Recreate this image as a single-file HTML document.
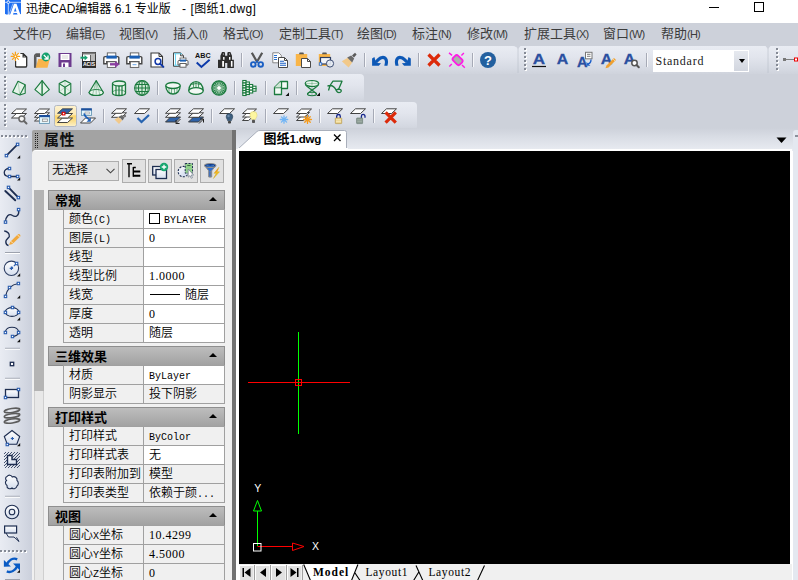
<!DOCTYPE html>
<html>
<head>
<meta charset="utf-8">
<title>迅捷CAD编辑器 6.1 专业版 - [图纸1.dwg]</title>
<style>
*{box-sizing:border-box;margin:0;padding:0}
html,body{width:798px;height:580px;overflow:hidden;background:#cdd1da}
body{position:relative;font-family:"Liberation Sans","Noto Sans CJK SC",sans-serif;font-size:12px;color:#000}
.abs{position:absolute}
#titlebar{left:0;top:0;width:798px;height:23px;background:#fff}
#title{left:26px;top:1px;height:16px;line-height:16px;font-size:12px;color:#000;white-space:pre}
#menubar{left:0;top:23px;width:798px;height:23px;background:#cdd1da}
.mi{position:absolute;top:23px;height:23px;line-height:22px;font-size:13px;color:#3c3c3c;white-space:nowrap}
.mi i{font-style:normal;font-size:11px;letter-spacing:-0.8px}
.tb{position:absolute;height:28px;border-radius:3px;background:linear-gradient(#e9ecf3 0%,#e2e5ed 40%,#d6dae3 80%,#cfd3dc 100%)}
.grip{position:absolute;left:4px;top:4px;width:2px;height:19px;background:repeating-linear-gradient(#8a8f9a 0 1px,#fff 1px 2px,transparent 2px 4px)}
.sep{position:absolute;width:1px;height:14px;background:#a6aab6;box-shadow:1px 0 0 #f6f7fa}
.selbtn{position:absolute;width:22.5px;height:21.5px;border:1px solid #b3b8c2;border-radius:2.5px;background:linear-gradient(#fdf1cd 0%,#fce9b4 42%,#fbd66e 50%,#fbdc84 70%,#fdf0c6 100%)}
svg{position:absolute;overflow:visible}
#ltb{left:0;top:130px;width:32px;height:450px;background:linear-gradient(90deg,#e9ecf3 0%,#dde1ea 45%,#cbd0dc 100%)}
#phead{left:32px;top:130px;width:200px;height:24px;background:#a3a3a3;border-radius:2px 0 0 0}
#ptitle{left:44px;top:129px;font-size:15px;font-weight:bold;line-height:22px;color:#111;letter-spacing:0.5px}
#pbody{left:32px;top:150px;width:200px;height:430px;background:#f0f0f0;border-radius:4px 0 0 0;border-top:1.5px solid #fff}
#psplit{left:232px;top:130px;width:4px;height:450px;background:#727272}
#psplit2{left:236px;top:128px;width:3px;height:452px;background:linear-gradient(#cdd1da 0,#e9ecf2 21px,#fff 21px)}
.simsun{font-family:"Liberation Serif","Noto Sans CJK SC",serif}
#tabbar{left:239px;top:128px;width:559px;height:23px;background:linear-gradient(#cdd1da,#d9dde5 40%,#e9ecf2)}
#canvas{left:239px;top:151px;width:551px;height:413px;background:#000}
#bbar{left:239px;top:564px;width:553px;height:16px;background:#f0f0f0}
.cat{position:absolute;left:48px;width:177px;height:20px;background:linear-gradient(#bdbdbd,#a2a2a2);border:1px solid #8e8e8e;font-weight:bold;font-size:13px;line-height:19px;padding-left:6px;color:#000}
.cat b{position:absolute;right:7px;top:6px;width:0;height:0;border-left:4px solid transparent;border-right:4px solid transparent;border-bottom:4.500px solid #000}
.row{position:absolute;left:63px;width:162px;height:20px;border:1px solid #a0a0a0;background:#f0f0f0;font-size:12px;font-weight:350;line-height:19px;white-space:nowrap;overflow:hidden}
.row .n{position:absolute;left:0;top:0;width:80px;height:18px;padding-left:5px;border-right:1px solid #a0a0a0;overflow:hidden}
.row .v{position:absolute;left:80px;top:0;width:80px;height:18px;padding-left:5px;overflow:hidden}
.row .w{background:#fff}
.lat{font-family:"Liberation Mono",monospace;font-size:10px;letter-spacing:0}
.swatch{position:absolute;left:5px;top:3px;width:11px;height:11px;border:1px solid #000;background:#fff}
.lwline{position:absolute;left:6px;top:8px;width:30px;height:1px;background:#000}
.btab{top:565px;height:15px;line-height:15px;font-family:"Liberation Serif",serif;font-size:11.5px;color:#000;white-space:nowrap}
.num{font-family:"Liberation Serif",serif;font-size:12px;letter-spacing:0.5px}
</style>
</head>
<body>
<div id="titlebar" class="abs"></div>
<svg style="left:5px;top:0" width="16" height="15" viewBox="0 0 16 15"><path d="M0 0H16V13.500L15 14.500H1L0 13.500z" fill="#1f6ff2"/><path d="M0 2.300H16M3.300 0V15" stroke="#fff" stroke-width="0.700"/><circle cx="3.300" cy="2.300" r="1.300" fill="#1f6ff2" stroke="#fff" stroke-width="0.800"/><path d="M5 15L9 3.800H11.500L15.500 15H12.600L10.250 7.500L7.900 15z" fill="#fff"/><path d="M8.200 11.500H12.300V13H8.200z" fill="#fff"/><path d="M3.800 15L8 3.500" stroke="#fff" stroke-width="0.500"/></svg>

<div id="title" class="abs">迅捷CAD编辑器 6.1 专业版<span style="position:absolute;left:156px;top:0">-</span><span style="position:absolute;left:164.500px;top:0;letter-spacing:0.330px">[图纸1.dwg]</span></div>
<div class="abs" style="left:709px;top:7px;width:10px;height:1px;background:#000"></div>
<div class="abs" style="left:754px;top:2px;width:10px;height:10px;border:1px solid #000"></div>
<div id="menubar" class="abs"></div>
<div class="mi" style="left:13px">文件<i>(F)</i></div>
<div class="mi" style="left:66px">编辑<i>(E)</i></div>
<div class="mi" style="left:119px">视图<i>(V)</i></div>
<div class="mi" style="left:173px">插入<i>(I)</i></div>
<div class="mi" style="left:223px">格式<i>(O)</i></div>
<div class="mi" style="left:279px">定制工具<i>(T)</i></div>
<div class="mi" style="left:357px">绘图<i>(D)</i></div>
<div class="mi" style="left:412px">标注<i>(N)</i></div>
<div class="mi" style="left:467px">修改<i>(M)</i></div>
<div class="mi" style="left:524px">扩展工具<i>(X)</i></div>
<div class="mi" style="left:603px">窗口<i>(W)</i></div>
<div class="mi" style="left:661px">帮助<i>(H)</i></div>
<div class="tb" style="left:0px;top:46px;width:517px;border-radius:0 4px 4px 0"></div><svg style="left:4px;top:47.8px" width="3" height="24" viewBox="0 0 3 24"><rect x="1" y="1" width="2" height="2" fill="#fff"/><rect x="0" y="0" width="2" height="2" fill="#858a95"/><rect x="1" y="5" width="2" height="2" fill="#fff"/><rect x="0" y="4" width="2" height="2" fill="#858a95"/><rect x="1" y="9" width="2" height="2" fill="#fff"/><rect x="0" y="8" width="2" height="2" fill="#858a95"/><rect x="1" y="13" width="2" height="2" fill="#fff"/><rect x="0" y="12" width="2" height="2" fill="#858a95"/><rect x="1" y="17" width="2" height="2" fill="#fff"/><rect x="0" y="16" width="2" height="2" fill="#858a95"/><rect x="1" y="21" width="2" height="2" fill="#fff"/><rect x="0" y="20" width="2" height="2" fill="#858a95"/></svg>
<svg style="left:11px;top:52px" width="16" height="16" viewBox="0 0 16 16"><path d="M4.600 9.500V14a1 1 0 0 0 1 1h9a1 1 0 0 0 1-1V5l-3.500-3.500H9.500" fill="#fff" stroke="#333" stroke-width="1.200"/><path d="M4.600 9.500V3l4-1.500h3.500V5H15.600V14H4.600z" fill="#fff" stroke="none"/><path d="M4.600 9V14a1 1 0 0 0 1 1h9a1 1 0 0 0 1-1V5l-3.500-3.500H9.500M12.100 1.500V5h3.500" fill="none" stroke="#333" stroke-width="1.200"/>
<g stroke="#f7a21b" stroke-width="1.200" stroke-linecap="round"><path d="M4.400 0.200v8.400M0.200 4.400h8.400M1.400 1.400l6 6M7.400 1.400l-6 6"/></g><circle cx="4.400" cy="4.400" r="0.800" fill="#fff"/></svg>
<svg style="left:34px;top:52px" width="16" height="16" viewBox="0 0 16 16"><path d="M0.800 15.500V4a1.800 1.800 0 0 1 1.800-1.800h3.400" fill="none" stroke="#5a5a5a" stroke-width="1.700"/><path d="M0 15.700V4.500h2.500v11.200z" fill="#5a5a5a"/><path d="M1.500 5V2.200H6V5z" fill="#5a5a5a"/>
<path d="M1.800 15.700l2.400-8.700h11.600l-2.300 8.700z" fill="#f9b44a"/>
<circle cx="11.900" cy="5" r="4.400" fill="#12a06e"/><path d="M9.800 3l3.600 3.600M14 3.400v3.600h-3.600" fill="none" stroke="#fff" stroke-width="1.300"/></svg>
<svg style="left:57px;top:52px" width="16" height="16" viewBox="0 0 16 16"><path d="M1.5 1h13v14h-13z" fill="#6c3a8e"/><rect x="3.5" y="2" width="9" height="6" fill="#fff"/><path d="M5 4h6M5 6h6" stroke="#c9c9c9" stroke-width="0.8"/><rect x="4.5" y="10.5" width="7" height="4.5" fill="#fff"/><rect x="6" y="11.5" width="2" height="3.5" fill="#6c3a8e"/></svg>
<svg style="left:80px;top:52px" width="16" height="16" viewBox="0 0 16 16"><rect x="2.5" y="0.5" width="13" height="15" fill="#fff" stroke="#3a3a3a"/><rect x="2.5" y="0.5" width="13" height="2" fill="#7a7a7a"/><rect x="11" y="3" width="4" height="6" fill="#b9b9b9"/><path d="M10.5 3v6" stroke="#3a3a3a" stroke-width="0.8"/>
<path d="M0.5 5.7h4.8" stroke="#17a06f" stroke-width="2"/><path d="M4.6 3l3.2 2.7-3.2 2.7z" fill="#17a06f"/>
<rect x="2" y="9" width="14" height="6.5" fill="#2b2b2b"/><text x="9" y="14.4" font-family="Liberation Sans,sans-serif" font-size="5.6" font-weight="bold" fill="#fff" text-anchor="middle" textLength="12" lengthAdjust="spacingAndGlyphs">ACIS</text></svg>
<svg style="left:103px;top:52px" width="16" height="16" viewBox="0 0 16 16"><rect x="4.300" y="0.900" width="8.500" height="4" fill="#fff" stroke="#5a5a5a" stroke-width="0.900"/><path d="M0.800 11.800V5.800a1.200 1.200 0 0 1 1.200-1.200h12.600a1.200 1.200 0 0 1 1.200 1.200V11.800h-3v-2h-9v2z" fill="#fff" stroke="#454545" stroke-width="1.400"/><rect x="3.400" y="3.600" width="10.400" height="3" fill="#1a5fb4"/><rect x="4.300" y="9.800" width="8.500" height="5.600" fill="#fff" stroke="#5a5a5a" stroke-width="0.900"/><path d="M7 12.300h6" stroke="#8a3fa0" stroke-width="2.400"/><path d="M12 8.900l4.600 3.400-4.600 3.400z" fill="#8a3fa0"/></svg>
<svg style="left:126px;top:52px" width="16" height="16" viewBox="0 0 16 16"><rect x="4.300" y="0.900" width="8.500" height="4" fill="#fff" stroke="#5a5a5a" stroke-width="0.900"/><path d="M0.800 11.800V5.800a1.200 1.200 0 0 1 1.200-1.200h12.600a1.200 1.200 0 0 1 1.200 1.200V11.800h-3v-2h-9v2z" fill="#fff" stroke="#454545" stroke-width="1.400"/><rect x="3.400" y="3.600" width="10.400" height="3" fill="#1a5fb4"/><rect x="4.300" y="9.800" width="8.500" height="5.600" fill="#fff" stroke="#5a5a5a" stroke-width="0.900"/><path d="M6.500 12.700h4" stroke="#6aa5e8" stroke-width="1"/></svg>
<svg style="left:149px;top:52px" width="16" height="16" viewBox="0 0 16 16"><path d="M2 1h8l3.5 3.5V15H2z" fill="#fff" stroke="#3a3a3a" stroke-width="1.1"/><path d="M10 1v3.5h3.5" fill="none" stroke="#3a3a3a"/><circle cx="9" cy="9.5" r="2.9" fill="#fff" stroke="#1238a8" stroke-width="1.5"/><path d="M11.2 11.7l3.2 3.2" stroke="#1238a8" stroke-width="2" stroke-linecap="round"/></svg>
<svg style="left:172px;top:52px" width="16" height="16" viewBox="0 0 16 16"><path d="M1.5 0.8h7l3 3v10.5h-10z" fill="#fff" stroke="#4a4a4a"/><path d="M8.5 0.8v3h3" fill="none" stroke="#4a4a4a"/><path d="M3.5 1.5v12M2 1.8h8M2 13.2h6" stroke="#5fd0f0" stroke-width="0.9" fill="none"/>
<rect x="8" y="6" width="6" height="3" fill="#fff" stroke="#5a5a5a" stroke-width="0.8"/><path d="M6 13V9.5a1 1 0 0 1 1-1h8a1 1 0 0 1 1 1V13h-2v-1.5h-6V13z" fill="#fff" stroke="#4a4a4a" stroke-width="0.9"/><rect x="8" y="7.6" width="6" height="2" fill="#1a5fb4"/><rect x="8" y="11.5" width="6" height="3.7" fill="#fff" stroke="#5a5a5a" stroke-width="0.9"/></svg>
<svg style="left:195px;top:52px" width="16" height="16" viewBox="0 0 16 16"><text x="7.900" y="6" font-family="Liberation Sans,sans-serif" font-size="7.800" font-weight="bold" fill="#111" text-anchor="middle" textLength="15.600" lengthAdjust="spacingAndGlyphs">ABC</text><path d="M1.700 10.600l4.700 4.400 8.200-7.150" fill="none" stroke="#0c3aaa" stroke-width="2"/></svg>
<svg style="left:218px;top:52px" width="16" height="16" viewBox="0 0 16 16"><path d="M4 0H6.600L7.100 1.500V3.700H9.300V1.500L9.800 0H12.400L14 3.700V7.850H15.900V15.900H9.300V10.900H7.100V15.900H0V7.850H2.400V3.700z" fill="#2e2e2e"/><path d="M5.100 5.100H6.500V7.850H5.100zM11 5.100H12.400V7.850H11z" fill="#fff"/><path d="M4.200 9H6V14.700H4.200zM12.900 9H14.500V14.700H12.900z" fill="#fff"/><circle cx="5.400" cy="2.100" r="0.500" fill="#fff"/><circle cx="11.500" cy="2.100" r="0.500" fill="#fff"/></svg>
<div class="sep" style="left:241px;top:53px"></div>
<svg style="left:249px;top:52px" width="16" height="16" viewBox="0 0 16 16"><path d="M2.8 0.8l5.2 9 5.2-9" fill="none" stroke="#555" stroke-width="2.2" stroke-linejoin="round"/><path d="M8 8.5v2" stroke="#1a5fc4" stroke-width="2"/><circle cx="4.3" cy="12.4" r="2.3" fill="none" stroke="#1a5fc4" stroke-width="1.9"/><circle cx="11.7" cy="12.4" r="2.3" fill="none" stroke="#1a5fc4" stroke-width="1.9"/></svg>
<svg style="left:272px;top:52px" width="16" height="16" viewBox="0 0 16 16"><path d="M0.8 0.8h6l2.5 2.5v7.5h-8.5z" fill="#fff" stroke="#7a7a7a" stroke-width="0.9"/><path d="M2 3.5h3M2 5.5h3M2 7.5h3" stroke="#2a6fd0" stroke-width="1"/>
<path d="M6.5 5.5h6l3 3v7h-9z" fill="#fff" stroke="#4a4a4a"/><path d="M12.5 5.5v3h3" fill="none" stroke="#4a4a4a"/><path d="M8 9.2h4M8 11.2h6M8 13.2h6" stroke="#1a5fc4" stroke-width="1.1"/></svg>
<svg style="left:295px;top:52px" width="16" height="16" viewBox="0 0 16 16"><path d="M0.8 2h11.4v12h-11.4z" fill="#f9b548"/><path d="M4 2.2h5l-0.6-1.6h-3.8z" fill="#555"/><path d="M6.5 6.5h6l3 3v6h-9z" fill="#fff" stroke="#4a4a4a"/><path d="M12.5 6.5v3h3" fill="none" stroke="#4a4a4a"/></svg>
<svg style="left:318px;top:52px" width="16" height="16" viewBox="0 0 16 16"><path d="M0.8 2h11.4v12h-11.4z" fill="#f9b548"/><path d="M4 2.2h5l-0.6-1.6h-3.8z" fill="#555"/><rect x="2.5" y="5.5" width="10" height="6.5" fill="#f2f4f8" stroke="#2d3e63" stroke-width="1.2"/><circle cx="12" cy="11.5" r="3.6" fill="#e8edf5" fill-opacity="0.9" stroke="#3d4e73" stroke-width="1"/><rect x="1.3" y="10.8" width="2.4" height="2.4" fill="#fff" stroke="#2a6fd0" stroke-width="0.9"/></svg>
<svg style="left:341px;top:52px" width="16" height="16" viewBox="0 0 16 16"><path d="M0.8 9.2l6-3.4 4.4 4.6-3.6 5z" fill="#f2c98a"/><path d="M6.2 5.4l4-2 3 3.2-2 3.8z" fill="#6a6a6a"/><path d="M11 3.4l3-2.6 1.6 1.6-2.6 3z" fill="#5a5a5a"/></svg>
<div class="sep" style="left:364px;top:53px"></div>
<svg style="left:372px;top:52px" width="16" height="16" viewBox="0 0 16 16"><path d="M4 10L6.300 7.600C8 5.700 9.500 5.400 11 5.400C13.300 5.400 14.500 7.500 14.500 9.700C14.500 12 13.900 12.800 13.900 13.800" fill="none" stroke="#0d58b6" stroke-width="3.100"/><path d="M0.100 6.400L2.400 4.900L3.400 8.600L5.200 11L9 11.300L6.800 13.800H0.100z" fill="#0d58b6"/></svg>
<svg style="left:395px;top:52px" width="16" height="16" viewBox="0 0 16 16"><g transform="translate(15.900 0) scale(-1 1)"><path d="M4 10L6.300 7.600C8 5.700 9.500 5.400 11 5.400C13.300 5.400 14.500 7.500 14.500 9.700C14.500 12 13.900 12.800 13.900 13.800" fill="none" stroke="#0d58b6" stroke-width="3.100"/><path d="M0.100 6.400L2.400 4.900L3.400 8.600L5.200 11L9 11.300L6.800 13.800H0.100z" fill="#0d58b6"/></g></svg>
<div class="sep" style="left:418px;top:53px"></div>
<svg style="left:426px;top:52px" width="16" height="16" viewBox="0 0 16 16"><path d="M2.5 2.5l11 11M13.500 2.5l-11 11" stroke="#dc2a0a" stroke-width="3.2"/></svg>
<svg style="left:449px;top:52px" width="16" height="16" viewBox="0 0 16 16"><rect x="-4.800" y="-3.500" width="9.600" height="7" rx="2.200" transform="translate(8.600 8.100) rotate(45)" fill="#a9b3ab" stroke="#ff1ae6" stroke-width="1.800"/><path d="M0 0.900L3.100 3.400M14.900 0.900L12.400 3.400M0.300 14.400L2.800 12M13 13L15.800 15.700" stroke="#ff1ae6" stroke-width="1.400"/></svg>
<div class="sep" style="left:472px;top:53px"></div>
<svg style="left:480px;top:52px" width="16" height="16" viewBox="0 0 16 16"><circle cx="8" cy="8" r="8" fill="#23609f"/><text x="8" y="12.600" font-family="Liberation Sans,sans-serif" font-size="13" font-weight="bold" fill="#fff" text-anchor="middle">?</text></svg>
<div class="tb" style="left:516px;top:46px;width:252px;border-radius:0"></div><svg style="left:524px;top:47.8px" width="3" height="24" viewBox="0 0 3 24"><rect x="1" y="1" width="2" height="2" fill="#fff"/><rect x="0" y="0" width="2" height="2" fill="#858a95"/><rect x="1" y="5" width="2" height="2" fill="#fff"/><rect x="0" y="4" width="2" height="2" fill="#858a95"/><rect x="1" y="9" width="2" height="2" fill="#fff"/><rect x="0" y="8" width="2" height="2" fill="#858a95"/><rect x="1" y="13" width="2" height="2" fill="#fff"/><rect x="0" y="12" width="2" height="2" fill="#858a95"/><rect x="1" y="17" width="2" height="2" fill="#fff"/><rect x="0" y="16" width="2" height="2" fill="#858a95"/><rect x="1" y="21" width="2" height="2" fill="#fff"/><rect x="0" y="20" width="2" height="2" fill="#858a95"/></svg>
<svg style="left:531px;top:52px" width="16" height="16" viewBox="0 0 16 16"><text x="8" y="12.2" font-family="Liberation Sans,sans-serif" font-size="14.7" font-weight="bold" fill="#2a4fa0" stroke="#2a4fa0" stroke-width="0.300" text-anchor="middle" textLength="12.3" lengthAdjust="spacingAndGlyphs">A</text><path d="M1 14.500H15" stroke="#111" stroke-width="1.200"/></svg>
<svg style="left:554px;top:52px" width="16" height="16" viewBox="0 0 16 16"><text x="8.5" y="12.2" font-family="Liberation Sans,sans-serif" font-size="14.7" font-weight="bold" fill="#2a4fa0" stroke="#2a4fa0" stroke-width="0.300" text-anchor="middle" textLength="11.5" lengthAdjust="spacingAndGlyphs">A</text></svg>
<svg style="left:577px;top:52px" width="16" height="16" viewBox="0 0 16 16"><text x="5.3" y="15.2" font-family="Liberation Sans,sans-serif" font-size="14.7" font-weight="bold" fill="#2a4fa0" stroke="#2a4fa0" stroke-width="0.300" text-anchor="middle" textLength="10.5" lengthAdjust="spacingAndGlyphs">A</text><rect x="8.500" y="0.300" width="6.500" height="6.500" fill="#fff" stroke="#777" stroke-width="1"/><path d="M10 2.300h3.500M10 4.300h3.500" stroke="#555" stroke-width="0.800"/><path d="M14 7.500C14 10 13 11.500 11 12" fill="none" stroke="#1c5fc8" stroke-width="1.400"/><path d="M9.500 10V13.800H13.300z" fill="#1c5fc8"/></svg>
<svg style="left:600px;top:52px" width="16" height="16" viewBox="0 0 16 16"><text x="6.5" y="12.2" font-family="Liberation Sans,sans-serif" font-size="14.7" font-weight="bold" fill="#2a4fa0" stroke="#2a4fa0" stroke-width="0.300" text-anchor="middle" textLength="11.5" lengthAdjust="spacingAndGlyphs">A</text><path d="M6.500 13.500L14 6L16 8L8.500 15.500L5.500 16.300z" fill="#f0a030"/><path d="M13 7L15 9" stroke="#f9e0b0" stroke-width="0.800"/></svg>
<svg style="left:623px;top:52px" width="16" height="16" viewBox="0 0 16 16"><text x="6.5" y="12.2" font-family="Liberation Sans,sans-serif" font-size="14.7" font-weight="bold" fill="#2a4fa0" stroke="#2a4fa0" stroke-width="0.300" text-anchor="middle" textLength="11.5" lengthAdjust="spacingAndGlyphs">A</text><circle cx="11.500" cy="11" r="2.700" fill="#fff" stroke="#555" stroke-width="1.500"/><path d="M13.500 13L15.800 15.300" stroke="#555" stroke-width="2" stroke-linecap="round"/></svg>
<div class="sep" style="left:646px;top:53px"></div>
<div class="abs" style="left:653px;top:50px;width:96px;height:22px;background:#fff"></div>
<div class="abs simsun" style="left:655.500px;top:51px;height:21px;line-height:21px;font-size:12px;letter-spacing:0.750px;color:#1a1a1a">Standard</div>
<div class="abs" style="left:734px;top:51px;width:14px;height:20px;background:linear-gradient(#e6e9ef,#d2d6df)"></div>
<div class="abs" style="left:738.500px;top:59px;width:0;height:0;border-left:3.500px solid transparent;border-right:3.500px solid transparent;border-top:4px solid #000"></div>
<div class="tb" style="left:768px;top:46px;width:30px;border-radius:0"></div><svg style="left:776px;top:47.8px" width="3" height="24" viewBox="0 0 3 24"><rect x="1" y="1" width="2" height="2" fill="#fff"/><rect x="0" y="0" width="2" height="2" fill="#858a95"/><rect x="1" y="5" width="2" height="2" fill="#fff"/><rect x="0" y="4" width="2" height="2" fill="#858a95"/><rect x="1" y="9" width="2" height="2" fill="#fff"/><rect x="0" y="8" width="2" height="2" fill="#858a95"/><rect x="1" y="13" width="2" height="2" fill="#fff"/><rect x="0" y="12" width="2" height="2" fill="#858a95"/><rect x="1" y="17" width="2" height="2" fill="#fff"/><rect x="0" y="16" width="2" height="2" fill="#858a95"/><rect x="1" y="21" width="2" height="2" fill="#fff"/><rect x="0" y="20" width="2" height="2" fill="#858a95"/></svg>
<svg style="left:514.5px;top:46px" width="6" height="28" viewBox="0 0 6 28"><path d="M3 2V27" stroke="#b9bec9" stroke-opacity="0.600" stroke-width="1"/><path d="M0.500 0H5.500L3 3z" fill="#cdd1da"/></svg>
<svg style="left:765px;top:46px" width="6" height="28" viewBox="0 0 6 28"><path d="M3 2V27" stroke="#b9bec9" stroke-opacity="0.600" stroke-width="1"/><path d="M0.500 0H5.500L3 3z" fill="#cdd1da"/></svg>
<svg style="left:783px;top:52px" width="16" height="16" viewBox="0 0 16 16"><path d="M1 7.500h11" stroke="#808080" stroke-width="1"/><rect x="0" y="6" width="3" height="3" fill="#777"/><rect x="11.500" y="6" width="3" height="3" fill="#fff" stroke="#e00" stroke-width="1"/></svg>
<div class="tb" style="left:0px;top:74px;width:364px;border-radius:0 4px 4px 0"></div><svg style="left:4px;top:75.8px" width="3" height="24" viewBox="0 0 3 24"><rect x="1" y="1" width="2" height="2" fill="#fff"/><rect x="0" y="0" width="2" height="2" fill="#858a95"/><rect x="1" y="5" width="2" height="2" fill="#fff"/><rect x="0" y="4" width="2" height="2" fill="#858a95"/><rect x="1" y="9" width="2" height="2" fill="#fff"/><rect x="0" y="8" width="2" height="2" fill="#858a95"/><rect x="1" y="13" width="2" height="2" fill="#fff"/><rect x="0" y="12" width="2" height="2" fill="#858a95"/><rect x="1" y="17" width="2" height="2" fill="#fff"/><rect x="0" y="16" width="2" height="2" fill="#858a95"/><rect x="1" y="21" width="2" height="2" fill="#fff"/><rect x="0" y="20" width="2" height="2" fill="#858a95"/></svg>
<svg style="left:11px;top:80px" width="16" height="16" viewBox="0 0 16 16"><g fill="none" stroke="#1b7a3e" stroke-width="1.1" stroke-linejoin="round"><path d="M7 1.200L14.200 4.800V13.200L8.800 15L1.600 12z" fill="#e6f3ea"/><path d="M14.200 4.800L8.800 15" /><path d="M7 1.200L8.800 15" stroke-width="0.5" stroke-opacity="0.5"/></g></svg>
<svg style="left:34px;top:80px" width="16" height="16" viewBox="0 0 16 16"><g fill="none" stroke="#1b7a3e" stroke-width="1.1" stroke-linejoin="round"><path d="M8.100 0.600L0.900 9.600L8.100 15.600L15.300 9.600z" fill="#e6f3ea"/><path d="M8.100 0.600V15.600" stroke-width="1.400"/></g></svg>
<svg style="left:57px;top:80px" width="16" height="16" viewBox="0 0 16 16"><g fill="none" stroke="#1b7a3e" stroke-width="1.1" stroke-linejoin="round"><path d="M8 0.400L2.200 3.600V12L8 15.600L13.800 12V3.600z" fill="#e6f3ea"/><path d="M8 7.200V15.600" stroke-width="1.400"/><path d="M2.200 3.600L8 7.200L13.800 3.600" stroke-width="1.100"/><path d="M8 0.400V7.200M2.200 12L8 7.200L13.800 12" stroke-width="0.400" stroke-opacity="0.500"/></g></svg>
<div class="sep" style="left:80px;top:81px"></div>
<svg style="left:88px;top:80px" width="16" height="16" viewBox="0 0 16 16"><g fill="none" stroke="#1b7a3e" stroke-width="1.1" stroke-linejoin="round"><path d="M8.200 0.600L1 12.500A7.200 3 0 0 0 15.400 12.500z" fill="#e6f3ea"/><ellipse cx="8.200" cy="12.500" rx="7.200" ry="3" stroke-width="0.900"/><path d="M8.200 0.600L4.500 15M8.200 0.600L11.900 15M8.200 0.600V15.400" stroke-width="0.500" stroke-opacity="0.700"/></g></svg>
<svg style="left:111px;top:80px" width="16" height="16" viewBox="0 0 16 16"><g fill="none" stroke="#1b7a3e" stroke-width="1.1" stroke-linejoin="round"><path d="M1.500 3.500V13A6.500 2.500 0 0 0 14.500 13V3.500" fill="#e6f3ea" stroke-width="1.300"/><ellipse cx="8" cy="3.500" rx="6.500" ry="2.500" fill="#e6f3ea" stroke-width="1.300"/><path d="M5 5.800V15.200M8 6V15.500M11 5.800V15.200" stroke-width="1.200"/><path d="M1.500 12.500A6.500 2.500 0 0 1 14.500 12.500" stroke-width="0.600"/></g></svg>
<svg style="left:134px;top:80px" width="16" height="16" viewBox="0 0 16 16"><g fill="none" stroke="#1b7a3e" stroke-width="1.1" stroke-linejoin="round"><circle cx="8" cy="8" r="7.400" fill="#cfe8d6"/><ellipse cx="8" cy="8" rx="3.600" ry="7.400" stroke-width="1"/><path d="M8 0.600V15.400M0.600 8H15.400M1.600 4.500H14.400M1.600 11.500H14.400" stroke-width="1"/><ellipse cx="8" cy="8" rx="6" ry="7.400" stroke-width="0.500"/></g></svg>
<div class="sep" style="left:157px;top:81px"></div>
<svg style="left:165px;top:80px" width="16" height="16" viewBox="0 0 16 16"><g fill="none" stroke="#1b7a3e" stroke-width="1.1" stroke-linejoin="round"><path d="M0.800 5.500C0.800 17 15.200 17 15.200 5.500" fill="#e6f3ea" stroke-width="1.300"/><ellipse cx="8" cy="5.500" rx="7.200" ry="3" fill="#f2f8f4" stroke-width="1.300"/><path d="M4 8V13M6.500 8.500V14M9.500 8.500V14M12 8V13" stroke-width="0.700" stroke-opacity="0.800"/><path d="M3.500 12.500Q8 15 12.500 12.500" stroke-width="0.700"/></g></svg>
<svg style="left:188px;top:80px" width="16" height="16" viewBox="0 0 16 16"><g fill="none" stroke="#1b7a3e" stroke-width="1.1" stroke-linejoin="round"><path d="M0.800 11C0.800 -1.500 15.200 -1.500 15.200 11" fill="#e6f3ea" stroke-width="1.300"/><ellipse cx="8" cy="11" rx="7.200" ry="3.300" fill="#f2f8f4" stroke-width="1.300"/><path d="M5.500 2.500V7.500M8 2V7.500M10.500 2.500V7.500" stroke-width="0.700"/><path d="M3.500 4.500Q8 2.500 12.500 4.500" stroke-width="0.800"/></g></svg>
<svg style="left:211px;top:80px" width="16" height="16" viewBox="0 0 16 16"><circle cx="8" cy="8" r="7.200" fill="#1b7a3e"/><path d="M10.20 8.00L15.00 8.00M10.07 8.75L14.58 10.39M9.69 9.41L13.36 12.50M9.10 9.91L11.50 14.06M8.38 10.17L9.22 14.89M7.62 10.17L6.78 14.89M6.90 9.91L4.50 14.06M6.31 9.41L2.64 12.50M5.93 8.75L1.42 10.39M5.80 8.00L1.00 8.00M5.93 7.25L1.42 5.61M6.31 6.59L2.64 3.50M6.90 6.09L4.50 1.94M7.62 5.83L6.78 1.11M8.38 5.83L9.22 1.11M9.10 6.09L11.50 1.94M9.69 6.59L13.36 3.50M10.07 7.25L14.58 5.61" stroke="#d8eede" stroke-width="0.700"/><circle cx="8" cy="8" r="2" fill="#fff"/><circle cx="8" cy="8" r="7.200" fill="none" stroke="#1b7a3e" stroke-width="1.200"/></svg>
<div class="sep" style="left:234px;top:81px"></div>
<svg style="left:242px;top:80px" width="16" height="16" viewBox="0 0 16 16"><g fill="#fff" stroke="#1b7a3e" stroke-width="1.100"><rect x="0.80" y="0.50" width="3.300" height="2.50"/><rect x="0.80" y="3.00" width="3.300" height="2.50"/><rect x="0.80" y="5.50" width="3.300" height="2.50"/><rect x="0.80" y="8.00" width="3.300" height="2.50"/><rect x="0.80" y="10.50" width="3.300" height="2.50"/><rect x="0.80" y="13.00" width="3.300" height="2.50"/><rect x="4.10" y="2.00" width="3.300" height="2.50"/><rect x="4.10" y="4.50" width="3.300" height="2.50"/><rect x="4.10" y="7.00" width="3.300" height="2.50"/><rect x="4.10" y="9.50" width="3.300" height="2.50"/><rect x="4.10" y="12.00" width="3.300" height="2.50"/><rect x="7.40" y="4.50" width="3.300" height="2.83"/><rect x="7.40" y="7.33" width="3.300" height="2.83"/><rect x="7.40" y="10.17" width="3.300" height="2.83"/><rect x="10.70" y="6.20" width="3.300" height="2.50"/><rect x="10.70" y="8.70" width="3.300" height="2.50"/></g></svg>
<div class="sep" style="left:265px;top:81px"></div>
<svg style="left:273px;top:80px" width="16" height="16" viewBox="0 0 16 16"><g fill="none" stroke="#1b7a3e" stroke-width="1.1" stroke-linejoin="round"><path d="M1.500 7.500L7.500 1.500H14.500V8.500H8.500V14.500H1.500z" fill="#f4faf6" stroke-width="1.300"/><path d="M1.500 7.500H8.500V1.500" stroke-width="1.300"/><path d="M1.500 7.500L7.500 1.500V7.500z" fill="#cfe6d6" stroke="none"/></g><path d="M16 12.500V16H12.500z" fill="#111"/></svg>
<div class="sep" style="left:296px;top:81px"></div>
<svg style="left:304px;top:80px" width="16" height="16" viewBox="0 0 16 16"><g fill="none" stroke="#1b7a3e" stroke-width="1.1" stroke-linejoin="round"><ellipse cx="8" cy="3.500" rx="6.800" ry="3" fill="#e6f3ea" stroke-width="1.200"/><path d="M1.400 4.500C3 8 13 12 12.500 14.500M14.600 4.500C13 8 3 12 3.500 14.500" stroke-width="1.200"/><ellipse cx="8" cy="14" rx="4.500" ry="1.700" stroke-width="1.100"/><path d="M8 0.500V15.500" stroke-width="0.600" stroke-opacity="0.600"/><path d="M1.500 3.500H14.500" stroke-width="0.500" stroke-opacity="0.600"/></g><path d="M16 12.500V16H12.500z" fill="#111"/></svg>
<svg style="left:327px;top:80px" width="16" height="16" viewBox="0 0 16 16"><g fill="none" stroke="#1b7a3e" stroke-width="1.1" stroke-linejoin="round"><path d="M0.500 6L3 5.500L6 1.200H15L11.500 9.500" stroke-width="1.300"/><path d="M3 5.500L1.500 10.500M3 5.500C6 5.500 8 7.500 9.500 11C10.500 13 13.500 13 14.200 11.200C14.800 9.300 11 8.300 9 10.500" stroke-width="1.300"/></g></svg>
<div class="tb" style="left:0px;top:102px;width:417px;border-radius:0 4px 4px 0"></div><svg style="left:4px;top:103.8px" width="3" height="24" viewBox="0 0 3 24"><rect x="1" y="1" width="2" height="2" fill="#fff"/><rect x="0" y="0" width="2" height="2" fill="#858a95"/><rect x="1" y="5" width="2" height="2" fill="#fff"/><rect x="0" y="4" width="2" height="2" fill="#858a95"/><rect x="1" y="9" width="2" height="2" fill="#fff"/><rect x="0" y="8" width="2" height="2" fill="#858a95"/><rect x="1" y="13" width="2" height="2" fill="#fff"/><rect x="0" y="12" width="2" height="2" fill="#858a95"/><rect x="1" y="17" width="2" height="2" fill="#fff"/><rect x="0" y="16" width="2" height="2" fill="#858a95"/><rect x="1" y="21" width="2" height="2" fill="#fff"/><rect x="0" y="20" width="2" height="2" fill="#858a95"/></svg>
<svg style="left:11px;top:108px" width="16" height="16" viewBox="0 0 16 16"><path d="M5.5 5.5H15.5L10.5 10.0H0.5z" fill="#fff" stroke="#3a3a3a" stroke-width="0.95" stroke-linejoin="round"/><path d="M5.5 1H15.5L10.5 5.5H0.5z" fill="#fff" stroke="#3a3a3a" stroke-width="0.95" stroke-linejoin="round"/><circle cx="10.800" cy="10.800" r="2.900" fill="#f4f4f4" stroke="#666" stroke-width="1.500"/><path d="M13 13L15.500 15.500" stroke="#666" stroke-width="2" stroke-linecap="round"/></svg>
<svg style="left:34px;top:108px" width="16" height="16" viewBox="0 0 16 16"><path d="M5.5 8.5H15.5L10.5 13.0H0.5z" fill="#fff" stroke="#3a3a3a" stroke-width="0.95" stroke-linejoin="round"/><path d="M5.5 4.8H15.5L10.5 9.3H0.5z" fill="#fff" stroke="#3a3a3a" stroke-width="0.95" stroke-linejoin="round"/><path d="M5.5 1H15.5L10.5 5.5H0.5z" fill="#fff" stroke="#3a3a3a" stroke-width="0.95" stroke-linejoin="round"/><rect x="5.500" y="7.500" width="10" height="8" fill="#e4f5fb" stroke="#5a8fb0" stroke-width="0.800"/><rect x="5.200" y="7" width="10.600" height="2.200" fill="#1c4f9c"/><rect x="8.500" y="11" width="5" height="2.400" fill="#eee" stroke="#888" stroke-width="0.700"/></svg>
<div class="selbtn" style="left:54px;top:105px"></div>
<svg style="left:57px;top:108px" width="16" height="16" viewBox="0 0 16 16"><path d="M5.5 10H15.5L10.5 14.5H0.5z" fill="#fff" stroke="#3a3a3a" stroke-width="0.95" stroke-linejoin="round"/><path d="M5.5 5.5H15.5L10.5 10.0H0.5z" fill="#fff" stroke="#3a3a3a" stroke-width="0.95" stroke-linejoin="round"/><path d="M5.5 0.8H15.5L10.5 5.3H0.5z" fill="#2f62a8" stroke="#3a3a3a" stroke-width="0.8" stroke-linejoin="round"/><rect x="5.300" y="4.300" width="2.600" height="2.600" fill="#fff" stroke="#e00000" stroke-width="1.100"/></svg>
<svg style="left:80px;top:108px" width="16" height="16" viewBox="0 0 16 16"><path d="M5.5 10H15.5L10.5 15H0.5z" fill="#fff" stroke="#3a3a3a" stroke-width="0.95" stroke-linejoin="round"/><rect x="1.500" y="1" width="10" height="6.500" fill="#e4f5fb" stroke="#5a8fb0" stroke-width="0.800"/><rect x="1.200" y="0.300" width="10.600" height="2.200" fill="#1c4f9c"/><rect x="5" y="4" width="4.500" height="2" fill="#eee" stroke="#999" stroke-width="0.600"/><path d="M4 5.500C5 9 7.500 10 9 11.500" fill="none" stroke="#1c5fb8" stroke-width="1.800"/><path d="M10.800 9.500V13.800H6.500z" fill="#1c5fb8"/></svg>
<div class="sep" style="left:103px;top:109px"></div>
<svg style="left:111px;top:108px" width="16" height="16" viewBox="0 0 16 16"><path d="M5.5 4.8H15.5L10.5 9.3H0.5z" fill="#fff" stroke="#3a3a3a" stroke-width="0.95" stroke-linejoin="round"/><path d="M5.5 0.8H15.5L10.5 5.3H0.5z" fill="#fff" stroke="#3a3a3a" stroke-width="0.95" stroke-linejoin="round"/><path d="M3.500 11.500L7.500 9L11 12.500L8 16z" fill="#f2c98a"/><path d="M8 8.500L11 7L13.500 9.500L11.500 12.500z" fill="#6a6a6a"/><circle cx="13.800" cy="8" r="1.300" fill="#777"/></svg>
<svg style="left:134px;top:108px" width="16" height="16" viewBox="0 0 16 16"><path d="M5.5 0.8H15.5L10.5 5.5H0.5z" fill="#fff" stroke="#3a3a3a" stroke-width="0.95" stroke-linejoin="round"/><path d="M3.500 10L7.500 14L15 7" fill="none" stroke="#2764b0" stroke-width="2.200"/></svg>
<div class="sep" style="left:157px;top:109px"></div>
<svg style="left:165px;top:108px" width="16" height="16" viewBox="0 0 16 16"><path d="M5.5 9H15.5L10.5 14H0.5z" fill="#2f62a8" stroke="#3a3a3a" stroke-width="0.95" stroke-linejoin="round"/><path d="M5.5 4.8H15.5L10.5 9.3H0.5z" fill="#fff" stroke="#3a3a3a" stroke-width="0.95" stroke-linejoin="round"/><path d="M5.5 0.8H15.5L10.5 5.3H0.5z" fill="#fff" stroke="#3a3a3a" stroke-width="0.95" stroke-linejoin="round"/><path d="M15.500 11L11 15.500M11 12V15.500H14.500" fill="none" stroke="#222" stroke-width="1"/></svg>
<svg style="left:188px;top:108px" width="16" height="16" viewBox="0 0 16 16"><path d="M5.5 9H15.5L10.5 14H0.5z" fill="#2f62a8" stroke="#3a3a3a" stroke-width="0.95" stroke-linejoin="round"/><path d="M5.5 4.8H15.5L10.5 9.3H0.5z" fill="#fff" stroke="#3a3a3a" stroke-width="0.95" stroke-linejoin="round"/><path d="M5.5 0.8H15.5L10.5 5.3H0.5z" fill="#fff" stroke="#3a3a3a" stroke-width="0.95" stroke-linejoin="round"/><path d="M11 15.500L15.500 11M12 11H15.500V14.500" fill="none" stroke="#222" stroke-width="1"/></svg>
<div class="sep" style="left:211px;top:109px"></div>
<svg style="left:219px;top:108px" width="16" height="16" viewBox="0 0 16 16"><path d="M5.5 0.8H15.5L10.5 5.5H0.5z" fill="#fff" stroke="#3a3a3a" stroke-width="0.95" stroke-linejoin="round"/><path d="M10.500 5.500a3.300 3.300 0 0 1 3.300 3.300c0 1.800-1.300 2.500-1.500 4h-3.600c-0.200-1.500-1.500-2.200-1.500-4a3.300 3.300 0 0 1 3.300-3.300z" fill="#3d5f80" stroke="#2a3f55" stroke-width="0.600"/><rect x="9" y="13" width="3" height="2.500" rx="0.800" fill="#444"/><circle cx="9.500" cy="8" r="1.200" fill="#7f9fbd" fill-opacity="0.700"/></svg>
<svg style="left:242px;top:108px" width="16" height="16" viewBox="0 0 16 16"><path d="M5.5 8H11.5L6.5 12.5H0.5z" fill="#fff" stroke="#3a3a3a" stroke-width="0.95" stroke-linejoin="round"/><path d="M5.5 4.5H12.5L7.5 9.0H0.5z" fill="#fff" stroke="#3a3a3a" stroke-width="0.95" stroke-linejoin="round"/><path d="M5.5 1H14.5L9.5 5.5H0.5z" fill="#fff" stroke="#3a3a3a" stroke-width="0.95" stroke-linejoin="round"/><path d="M11.500 3.500a3.600 3.600 0 0 1 3.600 3.600c0 2-1.400 2.800-1.600 4.500h-4c-0.200-1.700-1.600-2.500-1.600-4.500a3.600 3.600 0 0 1 3.600-3.600z" fill="#fdf6a0" stroke="#d8cc70" stroke-width="0.500"/><rect x="10" y="11.800" width="3" height="3.200" rx="0.800" fill="#555"/></svg>
<div class="sep" style="left:265px;top:109px"></div>
<svg style="left:273px;top:108px" width="16" height="16" viewBox="0 0 16 16"><path d="M5.5 0.8H15.5L10.5 5.5H0.5z" fill="#fff" stroke="#3a3a3a" stroke-width="0.95" stroke-linejoin="round"/><path d="M7.30 11.50L14.70 11.50M8.38 8.88L13.62 14.12M11.00 7.80L11.00 15.20M13.62 8.88L8.38 14.12" stroke="#6fb4f5" stroke-width="1.3" stroke-linecap="round"/></svg>
<svg style="left:296px;top:108px" width="16" height="16" viewBox="0 0 16 16"><path d="M5.5 8H12.5L7.5 12.5H0.5z" fill="#fff" stroke="#3a3a3a" stroke-width="0.95" stroke-linejoin="round"/><path d="M5.5 4.5H13.5L8.5 9.0H0.5z" fill="#fff" stroke="#3a3a3a" stroke-width="0.95" stroke-linejoin="round"/><path d="M5.5 1H15.5L10.5 5.5H0.5z" fill="#fff" stroke="#3a3a3a" stroke-width="0.95" stroke-linejoin="round"/><path d="M7.60 11.50L15.40 11.50M8.74 8.74L14.26 14.26M11.50 7.60L11.50 15.40M14.26 8.74L8.74 14.26" stroke="#f59a1b" stroke-width="1.3" stroke-linecap="round"/></svg>
<div class="sep" style="left:319px;top:109px"></div>
<svg style="left:327px;top:108px" width="16" height="16" viewBox="0 0 16 16"><path d="M5.5 0.8H15.5L10.5 5.5H0.5z" fill="#fff" stroke="#3a3a3a" stroke-width="0.95" stroke-linejoin="round"/><path d="M9.700 10.200V8.300a1.800 1.800 0 0 1 3.600 0V10.200" fill="none" stroke="#14248a" stroke-width="1.300"/><rect x="8.300" y="10" width="6.400" height="5.600" rx="0.500" fill="#ecd48e" stroke="#b89a4a" stroke-width="0.700"/><path d="M9 11.800h5M9 13.600h5" stroke="#f8ebc0" stroke-width="0.800"/></svg>
<svg style="left:350px;top:108px" width="16" height="16" viewBox="0 0 16 16"><path d="M5.5 0.8H15.5L10.5 5.5H0.5z" fill="#fff" stroke="#3a3a3a" stroke-width="0.95" stroke-linejoin="round"/><path d="M11.400 10.200V8.200a1.800 1.800 0 0 1 3.600 0V9.800" fill="none" stroke="#14248a" stroke-width="1.300"/><rect x="6.600" y="10" width="6" height="5.600" rx="0.500" fill="#8b9b93" stroke="#6f7f77" stroke-width="0.700"/><path d="M7.300 11.800h4.600M7.300 13.600h4.600" stroke="#a4b2aa" stroke-width="0.800"/></svg>
<div class="sep" style="left:373px;top:109px"></div>
<svg style="left:381px;top:108px" width="16" height="16" viewBox="0 0 16 16"><path d="M5.5 0.8H15.5L10.5 5.5H0.5z" fill="#fff" stroke="#3a3a3a" stroke-width="0.95" stroke-linejoin="round"/><path d="M4.600 4.400L14.800 14.600M14.800 4.400L4.600 14.600" stroke="#dc2a0a" stroke-width="3.200"/></svg>
<div id="ltb" class="abs"></div>
<svg style="left:0;top:130px" width="32" height="450" viewBox="0 130 32 450"><defs><linearGradient id="lg" x1="0" y1="0" x2="0" y2="1"><stop offset="0" stop-color="#fff"/><stop offset="1" stop-color="#d5deee"/></linearGradient></defs><path d="M6.400 155.600L17.600 144.400" stroke="#1d2d50" stroke-width="1.700"/><rect x="5.20" y="154.40" width="2.4" height="2.4" fill="#fff" stroke="#2a5db0" stroke-width="1.100"/><rect x="16.40" y="143.20" width="2.4" height="2.4" fill="#fff" stroke="#2a5db0" stroke-width="1.100"/><path d="M20.2 155.2V158.39999999999998H17z" fill="#111"/><path d="M9.500 168.500C2.500 168.500 2.500 176.500 9.500 176.500H17.600" fill="none" stroke="#1d2d50" stroke-width="1.300"/><rect x="8.30" y="167.30" width="2.4" height="2.4" fill="#fff" stroke="#2a5db0" stroke-width="1.100"/><rect x="8.30" y="175.30" width="2.4" height="2.4" fill="#fff" stroke="#2a5db0" stroke-width="1.100"/><rect x="16.40" y="175.30" width="2.4" height="2.4" fill="#fff" stroke="#2a5db0" stroke-width="1.100"/><path d="M20.2 177.2V180.39999999999998H17z" fill="#111"/><path d="M8.500 187.400L18.400 197.600M5.300 191L15.200 200.300" stroke="#1d2d50" stroke-width="1.900" stroke-linecap="round"/><rect x="7.30" y="186.20" width="2.4" height="2.4" fill="#fff" stroke="#2a5db0" stroke-width="1.100"/><rect x="17.20" y="196.40" width="2.4" height="2.4" fill="#fff" stroke="#2a5db0" stroke-width="1.100"/><path d="M18.600 209.600C19.500 216 15.500 217.500 12.500 215.500C9 213 5.500 216.500 5.500 222" fill="none" stroke="#1d2d50" stroke-width="1.400"/><rect x="17.40" y="208.40" width="2.4" height="2.4" fill="#fff" stroke="#2a5db0" stroke-width="1.100"/><rect x="4.30" y="220.90" width="2.4" height="2.4" fill="#fff" stroke="#2a5db0" stroke-width="1.100"/><path d="M4.200 231C7 231 10 234 9.300 236.500C8.500 238.500 5.500 239.500 5.800 242C6 244 7 245.300 8.500 245.500" fill="none" stroke="#1d2d50" stroke-width="1.400"/><path d="M9 245L10.300 241.700L18 234.200A1.600 1.600 0 0 1 20.200 236.400L12.500 244z" fill="#f0a83c"/><path d="M10.800 241.200L13 243.400M17.300 234.700L19.600 237" stroke="#fff" stroke-width="0.700"/><path d="M5 252.5H20" stroke="#9da2ad" stroke-width="1"/><path d="M5 253.5H20" stroke="#fff" stroke-width="1"/><circle cx="11.400" cy="268.300" r="7.200" fill="url(#lg)" stroke="#2d3e63" stroke-width="1.100"/><path d="M11.400 268.300L16.600 263.500" stroke="#2a5db0" stroke-width="1.100" stroke-dasharray="2 1.300"/><path d="M9.700 268.300H13.100M11.400 266.600V270" stroke="#2a5db0" stroke-width="1.200"/><rect x="15.40" y="262.30" width="2.4" height="2.4" fill="#fff" stroke="#2a5db0" stroke-width="1.100"/><path d="M20.2 273.2V276.4H17z" fill="#111"/><path d="M18.400 283.500C11 284.500 7 289 5.500 296.400" fill="none" stroke="#1d2d50" stroke-width="1.200"/><rect x="17.20" y="282.30" width="2.4" height="2.4" fill="#fff" stroke="#2a5db0" stroke-width="1.100"/><rect x="8.30" y="286.30" width="2.4" height="2.4" fill="#fff" stroke="#2a5db0" stroke-width="1.100"/><rect x="4.30" y="295.20" width="2.4" height="2.4" fill="#fff" stroke="#2a5db0" stroke-width="1.100"/><path d="M20.2 295.2V298.4H17z" fill="#111"/><ellipse cx="12" cy="312" rx="6.700" ry="4.400" fill="url(#lg)" stroke="#1d2d50" stroke-width="1.100"/><rect x="4.20" y="311.20" width="2.4" height="2.4" fill="#fff" stroke="#2a5db0" stroke-width="1.100"/><rect x="17.40" y="311.20" width="2.4" height="2.4" fill="#fff" stroke="#2a5db0" stroke-width="1.100"/><rect x="11.30" y="306.30" width="2.4" height="2.4" fill="#fff" stroke="#2a5db0" stroke-width="1.100"/><path d="M20.2 317.2V320.4H17z" fill="#111"/><path d="M5.400 332.500C5.400 325.500 18.600 325.500 18.600 332.500C18.600 334.500 15.500 336.500 12.500 336.500" fill="none" stroke="#1d2d50" stroke-width="1.200"/><rect x="4.20" y="331.30" width="2.4" height="2.4" fill="#fff" stroke="#2a5db0" stroke-width="1.100"/><rect x="17.40" y="331.30" width="2.4" height="2.4" fill="#fff" stroke="#2a5db0" stroke-width="1.100"/><rect x="11.30" y="335.30" width="2.4" height="2.4" fill="#fff" stroke="#2a5db0" stroke-width="1.100"/><path d="M20.2 339V342.2H17z" fill="#111"/><path d="M5 348.3H20" stroke="#9da2ad" stroke-width="1"/><path d="M5 349.3H20" stroke="#fff" stroke-width="1"/><rect x="10.300" y="362.300" width="3.400" height="3.400" fill="#fff" stroke="#1d2d50" stroke-width="1.300"/><path d="M5 378.3H20" stroke="#9da2ad" stroke-width="1"/><path d="M5 379.3H20" stroke="#fff" stroke-width="1"/><rect x="5.500" y="389.500" width="13" height="8" fill="url(#lg)" stroke="#1d2d50" stroke-width="1.300"/><rect x="17.30" y="388.30" width="2.4" height="2.4" fill="#fff" stroke="#2a5db0" stroke-width="1.100"/><rect x="4.30" y="396.30" width="2.4" height="2.4" fill="#fff" stroke="#2a5db0" stroke-width="1.100"/><ellipse cx="12" cy="410.5" rx="7.800" ry="2" transform="rotate(-8 12 410.5)" fill="#e8eaee" fill-opacity="0.500" stroke="#5c5c5c" stroke-width="1.700"/><ellipse cx="12" cy="415.7" rx="7.800" ry="2" transform="rotate(-8 12 415.7)" fill="#e8eaee" fill-opacity="0.500" stroke="#5c5c5c" stroke-width="1.700"/><ellipse cx="12" cy="421" rx="7.800" ry="2" transform="rotate(-8 12 421)" fill="#e8eaee" fill-opacity="0.500" stroke="#5c5c5c" stroke-width="1.700"/><path d="M12 430.500L19.700 436.500L16.800 444.300H7.300L4.300 436.500z" fill="url(#lg)" stroke="#1d2d50" stroke-width="1.100"/><path d="M10.800 438.500H14M12.400 436.900V440.100" stroke="#2a5db0" stroke-width="1.200"/><rect x="6.10" y="443.30" width="2.4" height="2.4" fill="#fff" stroke="#2a5db0" stroke-width="1.100"/><path d="M20.2 443V446.2H17z" fill="#111"/><path d="M6 452L4 454M9 452L4 457M12 452L4 460M15 452L4 463M18 452L4 466M20 453L5 468M20 456L8 468M20 459L11 468M20 462L14 468M20 465L17 468" stroke="#1d2d50" stroke-width="0.800"/><path d="M7.500 455.500H12V459.500H16.500V464.500H7.500z" fill="url(#lg)" stroke="#1d2d50" stroke-width="1.400"/><path d="M7 476.500C8.500 474.500 11.500 474.800 12.300 477C14.500 476 17.500 477.500 17 480.500C19 482 18.500 485 17 486C16.500 488.500 13.500 489.500 12 488C10 489.500 6.500 488.500 7 485.500C5 484 5 481.500 6.500 480.500C5 479 5.500 477 7 476.500z" fill="url(#lg)" stroke="#1d2d50" stroke-width="1.100"/><path d="M5 496.3H20" stroke="#9da2ad" stroke-width="1"/><path d="M5 497.3H20" stroke="#fff" stroke-width="1"/><circle cx="12" cy="512" r="6.800" fill="url(#lg)" stroke="#1d2d50" stroke-width="1.100"/><circle cx="12" cy="512" r="2.800" fill="#e9edf5" stroke="#1d2d50" stroke-width="1.100"/><path d="M6 533L8.500 537H14L19 541.500L16.500 537.300" fill="#eef2f8" stroke="#1d2d50" stroke-width="1"/><rect x="4.600" y="526" width="12" height="7" fill="url(#lg)" stroke="#1d2d50" stroke-width="1.200"/><rect x="1" y="551" width="2" height="2" fill="#fff"/><rect x="0" y="550" width="2" height="2" fill="#858a95"/><rect x="5" y="551" width="2" height="2" fill="#fff"/><rect x="4" y="550" width="2" height="2" fill="#858a95"/><rect x="9" y="551" width="2" height="2" fill="#fff"/><rect x="8" y="550" width="2" height="2" fill="#858a95"/><rect x="13" y="551" width="2" height="2" fill="#fff"/><rect x="12" y="550" width="2" height="2" fill="#858a95"/><rect x="17" y="551" width="2" height="2" fill="#fff"/><rect x="16" y="550" width="2" height="2" fill="#858a95"/><rect x="21" y="551" width="2" height="2" fill="#fff"/><rect x="20" y="550" width="2" height="2" fill="#858a95"/><rect x="25" y="551" width="2" height="2" fill="#fff"/><rect x="24" y="550" width="2" height="2" fill="#858a95"/><rect x="2" y="136" width="2" height="2" fill="#fff"/><rect x="1" y="135" width="2" height="2" fill="#858a95"/><rect x="6" y="136" width="2" height="2" fill="#fff"/><rect x="5" y="135" width="2" height="2" fill="#858a95"/><rect x="10" y="136" width="2" height="2" fill="#fff"/><rect x="9" y="135" width="2" height="2" fill="#858a95"/><rect x="14" y="136" width="2" height="2" fill="#fff"/><rect x="13" y="135" width="2" height="2" fill="#858a95"/><rect x="18" y="136" width="2" height="2" fill="#fff"/><rect x="17" y="135" width="2" height="2" fill="#858a95"/><rect x="22" y="136" width="2" height="2" fill="#fff"/><rect x="21" y="135" width="2" height="2" fill="#858a95"/><rect x="26" y="136" width="2" height="2" fill="#fff"/><rect x="25" y="135" width="2" height="2" fill="#858a95"/><path d="M3.900 560V566.800L10.900 566.600z" fill="#0a5bc4"/><path d="M6.800 564.500C9 560.500 13 557.300 17.200 559.300" fill="none" stroke="#0a5bc4" stroke-width="2.500"/><path d="M13 563.400H20V570.400z" fill="#0a5bc4"/><path d="M17.200 566.300C15 570.300 11 573.200 6.800 571.300" fill="none" stroke="#0a5bc4" stroke-width="2.500"/><path d="M20 569.800V572.800H17z" fill="#111"/><path d="M5 579.500H20" stroke="#9da2ad" stroke-width="1"/></svg>
<div id="phead" class="abs"></div>
<svg style="left:35px;top:133px" width="4" height="15" viewBox="0 0 4 15"><path d="M0.500 0V15M2.500 0V15" stroke="#222" stroke-width="1" stroke-dasharray="1 1"/></svg>
<div id="ptitle" class="abs">属性</div>
<div id="pbody" class="abs"></div>
<div id="psplit" class="abs"></div>
<div id="psplit2" class="abs"></div>
<div class="abs" style="left:48px;top:161px;width:71px;height:20px;background:#e3e3e3;border:1px solid #adadad"></div>
<div class="abs" style="left:52px;top:161px;height:20px;line-height:19px;font-size:12px;font-weight:350;color:#000">无选择</div>
<svg style="left:106px;top:168px" width="9" height="6" viewBox="0 0 9 6"><path d="M0.500 0.800L4.500 4.800L8.500 0.800" fill="none" stroke="#444" stroke-width="1.100"/></svg>
<div class="abs" style="left:122px;top:159px;width:24px;height:24px;background:#e1e1e1;border:1px solid #adadad"></div>
<div class="abs" style="left:148px;top:159px;width:24px;height:24px;background:#e1e1e1;border:1px solid #adadad"></div>
<div class="abs" style="left:174px;top:159px;width:24px;height:24px;background:#e1e1e1;border:1px solid #adadad"></div>
<div class="abs" style="left:200px;top:159px;width:24px;height:24px;background:#e1e1e1;border:1px solid #adadad"></div>
<div class="abs" style="left:34.300px;top:190px;width:9.400px;height:200.500px;background:#b4b4b4"></div>
<div class="abs" style="left:34.300px;top:390.500px;width:9.400px;height:190px;background:#e8e8e8;border-left:1px solid #cfcfcf;border-right:1px solid #cfcfcf"></div>
<div class="cat" style="top:190px">常规<b></b></div>
<div class="row simsun" style="top:209px"><div class="n">颜色<span class="lat">(C)</span></div><div class="v w"><span class="swatch"></span><span class="lat" style="margin-left:15px">BYLAYER</span></div></div>
<div class="row simsun" style="top:228px"><div class="n">图层<span class="lat">(L)</span></div><div class="v w"><span class="num">0</span></div></div>
<div class="row simsun" style="top:247px"><div class="n">线型</div><div class="v w"></div></div>
<div class="row simsun" style="top:266px"><div class="n">线型比例</div><div class="v w"><span class="num">1.0000</span></div></div>
<div class="row simsun" style="top:285px"><div class="n">线宽</div><div class="v w"><span class="lwline"></span><span style="margin-left:36px">随层</span></div></div>
<div class="row simsun" style="top:304px"><div class="n">厚度</div><div class="v w"><span class="num">0</span></div></div>
<div class="row simsun" style="top:323px"><div class="n">透明</div><div class="v w">随层</div></div>
<div class="cat" style="top:346px">三维效果<b></b></div>
<div class="row simsun" style="top:365px"><div class="n">材质</div><div class="v w"><span class="lat">ByLayer</span></div></div>
<div class="row simsun" style="top:384px"><div class="n">阴影显示</div><div class="v">投下阴影</div></div>
<div class="cat" style="top:407px">打印样式<b></b></div>
<div class="row simsun" style="top:426px"><div class="n">打印样式</div><div class="v"><span class="lat">ByColor</span></div></div>
<div class="row simsun" style="top:445px"><div class="n">打印样式表</div><div class="v w">无</div></div>
<div class="row simsun" style="top:464px"><div class="n">打印表附加到</div><div class="v">模型</div></div>
<div class="row simsun" style="top:483px"><div class="n">打印表类型</div><div class="v">依赖于颜<span class="lat">...</span></div></div>
<div class="cat" style="top:506px">视图<b></b></div>
<div class="row simsun" style="top:525px"><div class="n">圆心<span class="lat">X</span>坐标</div><div class="v"><span class="num">10.4299</span></div></div>
<div class="row simsun" style="top:544px"><div class="n">圆心<span class="lat">Y</span>坐标</div><div class="v"><span class="num">4.5000</span></div></div>
<div class="row simsun" style="top:563px"><div class="n">圆心<span class="lat">Z</span>坐标</div><div class="v"><span class="num">0</span></div></div>
<svg style="left:126px;top:163px" width="16" height="16" viewBox="0 0 16 16"><path d="M1 0.700H6M3 0.700V14.200M7.300 4V13.700M7.300 4.500H9.800" fill="none" stroke="#000" stroke-width="1.400"/><path d="M7.300 8.500H14.300M7.300 12.800H14.300" fill="none" stroke="#000" stroke-width="1.900"/></svg>
<svg style="left:152px;top:163px" width="16" height="16" viewBox="0 0 16 16"><defs><linearGradient id="lg2" x1="0" y1="0" x2="0" y2="1"><stop offset="0" stop-color="#fff"/><stop offset="1" stop-color="#d5deee"/></linearGradient></defs><rect x="0.700" y="3.500" width="9" height="8.500" fill="url(#lg2)" stroke="#1d2d50" stroke-width="1.300"/><rect x="4" y="6.500" width="10.500" height="9" fill="url(#lg2)" stroke="#1d2d50" stroke-width="1.300"/><circle cx="12" cy="4" r="4.200" fill="#18a66f"/><path d="M9.700 4H14.300M12 1.700V6.300" stroke="#fff" stroke-width="1.300"/></svg>
<svg style="left:178px;top:163px" width="16" height="16" viewBox="0 0 16 16"><defs><linearGradient id="lg3" x1="0" y1="0" x2="1" y2="1"><stop offset="0" stop-color="#fff"/><stop offset="1" stop-color="#c4d0ea"/></linearGradient></defs><circle cx="5.400" cy="8.600" r="5.200" fill="url(#lg3)" stroke="#1d2d50" stroke-width="1.100" stroke-dasharray="2 1.300"/><rect x="7.200" y="0.500" width="7.300" height="9.700" fill="#8fd08a" stroke="#1d2d50" stroke-width="1" stroke-dasharray="2 1.300"/><path d="M9.300 2.500H12.500" stroke="#2a5a3a" stroke-width="0.900"/><path d="M10.200 6V14.200L12 12.600L13.300 15.300L14.500 14.700L13.200 12.100H15.600z" fill="#fafafa" stroke="#7a8594" stroke-width="0.800"/></svg>
<svg style="left:204px;top:163px" width="16" height="16" viewBox="0 0 16 16"><path d="M0.800 2.800L4.700 7.800V14H7.700V7.800L11.600 2.800z" fill="#2f6fd0" stroke="#8a8a8a" stroke-width="1"/><path d="M5.500 8V14.200H7V8z" fill="#8a8a8a"/><path d="M6 8.500V13.500" stroke="#1a5fd0" stroke-width="0.800"/><ellipse cx="6.200" cy="2.500" rx="5.700" ry="2" fill="#0a3a90" stroke="#8f8f8f" stroke-width="1.100"/><path d="M2.500 2.600Q6 4 10 2.600" stroke="#5fa8f0" stroke-width="0.700" fill="none"/><path d="M14.900 4.300L10 10.300H12.300L9.400 15.500L15.500 8.800H13z" fill="#f7c01e" stroke="#c8a010" stroke-width="0.400"/><path d="M14 6L11.500 9.500" stroke="#f08a1a" stroke-width="0.800"/></svg>
<div id="tabbar" class="abs"></div>
<div class="abs" style="left:239px;top:149px;width:553px;height:2px;background:#fff"></div>
<svg style="left:238px;top:130px" width="110" height="21" viewBox="238 130 110 21"><path d="M238.500 148.500L257 131.500Q258 130.500 260 130.500H344.500Q346.500 130.500 346.500 132.500V148.500z" fill="#fff" stroke="#a9afbb" stroke-width="1"/><rect x="238" y="148" width="110" height="3" fill="#fff"/><path d="M334 134.500L340.500 141M340.500 134.500L334 141" stroke="#000" stroke-width="1.300"/></svg>
<div class="abs" style="left:263.500px;top:130px;height:18px;line-height:18px;font-size:13px;font-weight:bold;color:#000;white-space:nowrap">图纸<span style="font-size:11.5px;letter-spacing:-0.2px">1.dwg</span></div>
<svg style="left:776px;top:137px" width="12" height="7" viewBox="0 0 12 7"><path d="M0.500 0.500H10.500L5.500 6z" fill="#000"/></svg>
<div id="canvas" class="abs"></div>
<div class="abs" style="left:790px;top:151px;width:2.500px;height:429px;background:#fff"></div>
<div class="abs" style="left:792.500px;top:130px;width:6px;height:450px;background:#e4e8f0;border-radius:3px 0 0 0"></div>
<div class="abs" style="left:795px;top:135px;width:3px;height:2px;background:#8a8f9a"></div>
<svg style="left:239px;top:151px" width="551" height="414" viewBox="239 151 551 414">
<path d="M298.500 332V434" stroke="#00ff00" stroke-width="1"/>
<path d="M248 382.500H350" stroke="#ff0000" stroke-width="1"/>
<rect x="295.500" y="379.500" width="6" height="6" fill="none" stroke="#ff0000" stroke-width="1"/>
<path d="M257.500 546V511" stroke="#00ff00" stroke-width="1"/>
<path d="M257.500 500.500L253.500 511H261.500z" fill="none" stroke="#00ff00" stroke-width="1"/>
<path d="M257.500 546.500H293" stroke="#ff0000" stroke-width="1"/>
<path d="M304 546.500L292.500 543V550.500z" fill="none" stroke="#ff0000" stroke-width="1"/>
<rect x="253.500" y="543.500" width="7.500" height="7.500" fill="none" stroke="#fff" stroke-width="1"/>
<text x="257.800" y="492.300" font-family="Liberation Sans,sans-serif" font-size="10.500" fill="#fff" text-anchor="middle">Y</text>
<text x="315.500" y="550.300" font-family="Liberation Sans,sans-serif" font-size="10.500" fill="#fff" text-anchor="middle">X</text>
</svg>
<div id="bbar" class="abs"></div>
<svg style="left:239px;top:564px" width="260" height="16" viewBox="239 564 260 16">
<g fill="#e1e1e1" stroke="#fff" stroke-width="1"><rect x="239.500" y="565.500" width="14.500" height="15"/><rect x="255.500" y="565.500" width="14.500" height="15"/><rect x="271.500" y="565.500" width="14.500" height="15"/><rect x="287.500" y="565.500" width="14.500" height="15"/></g>
<path d="M254.500 565V580M270.500 565V580M286.500 565V580M302.500 565V580" stroke="#a0a0a0" stroke-width="1"/>
<g fill="#000"><rect x="242.500" y="568" width="1.500" height="9"/><path d="M250.500 568V577L244.500 572.500z"/><path d="M266 568V577L260 572.500z"/><path d="M276 568V577L282 572.500z"/><path d="M290.500 568V577L296.500 572.500z"/><rect x="297" y="568" width="1.500" height="9"/></g>
<path d="M303.700 564.500L310.300 580H351.700L357.700 564.500z" fill="#fff"/>
<path d="M303.700 564.500L310.500 580.500M357.900 564.500L351.500 580.500M354.700 572.500L360 580.500M416 565.500L422.800 580.500M418.800 572L413.600 580.500M484.500 565.500L477.500 580.500" fill="none" stroke="#000" stroke-width="1.100"/>
</svg>
<div class="abs btab" style="left:313px;font-weight:bold;letter-spacing:1px">Model</div>
<div class="abs btab" style="left:365.500px;letter-spacing:0.600px">Layout1</div>
<div class="abs btab" style="left:428.500px;letter-spacing:0.600px">Layout2</div>

</body>
</html>
